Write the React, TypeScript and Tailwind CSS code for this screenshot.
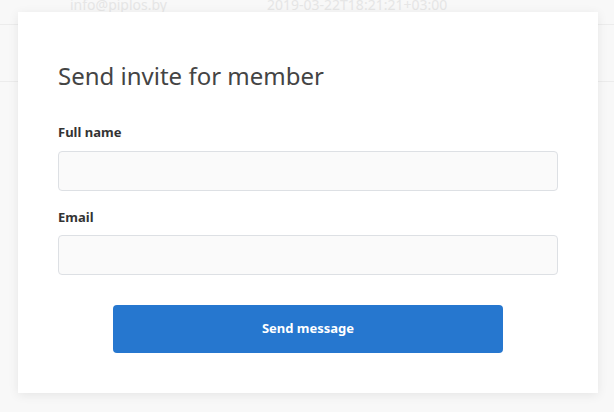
const font = { fontFamily: '"Noto Sans", "Open Sans", sans-serif' };

export default function App() {
  return (
    <div className="relative h-[412px] w-full overflow-hidden bg-[#f8f8f8]" style={font}>
      {/* faded table behind the dialog */}
      <div className="-mt-[15px]">
        <div className="flex h-[40px] items-center border-b border-[#ececec] text-[14px] text-[#e6e6e6]">
          <div className="w-[267px] pl-[70px]">info@piplos.by</div>
          <div>2019-03-22T18:21:21+03:00</div>
        </div>
        <div className="h-[57px] border-b border-[#ececec]" />
      </div>

      <div className="absolute left-[18px] top-[12px] w-[580px] bg-white px-[40px] pt-[48px] pb-[40px] shadow-[0_2px_10px_rgba(0,0,0,0.08)]">
        <h2 className="text-[24px] leading-[32px] text-[#444]">Send invite for member</h2>

        <form className="mt-[32px] flex flex-col">
          <label className="text-[13px] font-bold leading-[16px] text-[#333]">Full name</label>
          <input
            type="text"
            className="mt-[11px] h-[40px] w-full rounded-[4px] border border-[#dde0e4] bg-[#fafafa] px-3 text-[14px] outline-none"
          />
          <label className="mt-[18px] text-[13px] font-bold leading-[16px] text-[#333]">Email</label>
          <input
            type="email"
            className="mt-[10px] h-[40px] w-full rounded-[4px] border border-[#dde0e4] bg-[#fafafa] px-3 text-[14px] outline-none"
          />
          <button
            type="button"
            className="mx-auto mt-[30px] h-[48px] w-[390px] rounded-[4px] bg-[#2677cf] text-[13px] font-bold text-white"
          >
            Send message
          </button>
        </form>
      </div>
    </div>
  );
}
